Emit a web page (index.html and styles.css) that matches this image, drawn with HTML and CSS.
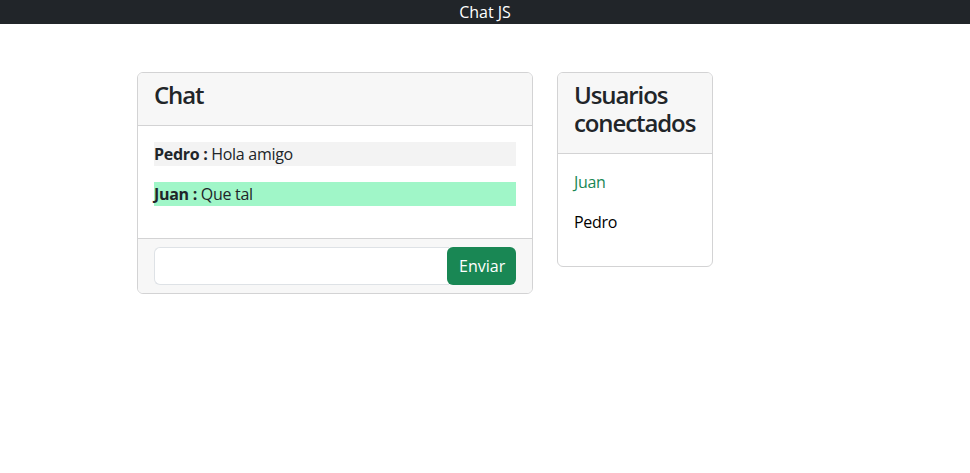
FILE: index.html
```html
<!DOCTYPE html>
<html lang="es">
<head>
<meta charset="utf-8">
<title>Chat JS</title>
<link rel="stylesheet" href="styles.css">
</head>
<body>
<nav class="navbar">Chat JS</nav>
<main class="container">
  <section class="card chat-card">
    <header class="card-header"><h3>Chat</h3></header>
    <div class="card-body">
      <p class="msg msg-other"><b>Pedro :</b> Hola amigo</p>
      <p class="msg msg-mine"><b>Juan :</b> Que tal</p>
    </div>
    <footer class="card-footer">
      <form class="input-group">
        <input type="text" class="form-control">
        <button type="button" class="btn-send">Enviar</button>
      </form>
    </footer>
  </section>
  <section class="card users-card">
    <header class="card-header"><h3>Usuarios conectados</h3></header>
    <div class="card-body">
      <p class="user user-me">Juan</p>
      <p class="user">Pedro</p>
    </div>
  </section>
</main>
</body>
</html>
```

FILE: styles.css
```css
* { box-sizing: border-box; }
body {
  margin: 0;
  font-family: "Open Sans", "Noto Sans", sans-serif;
  font-size: 16px;
  line-height: 1.5;
  color: #212529;
  background: #fff;
}
.navbar {
  height: 24px;
  background: #212529;
  color: #fff;
  text-align: center;
  font-size: 16px;
  line-height: 24px;
}
.container {
  width: 720px;
  margin: 48px auto 0;
  padding: 0 12px;
  display: flex;
  align-items: flex-start;
  gap: 24px;
  letter-spacing: -0.3px;
}
.card {
  border: 1px solid #d3d3d4;
  border-radius: 6px;
  background: #fff;
  overflow: hidden;
}
.chat-card { width: 396px; }
.users-card { width: 156px; }
.card-header {
  background: #f7f7f7;
  border-bottom: 1px solid #d3d3d4;
  padding: 8px 16px;
}
.card-header h3 {
  margin: 0 0 8px;
  font-size: 24px;
  font-weight: 600;
  line-height: 28px;
  letter-spacing: -1.1px;
}
.card-body { padding: 16px; }
.msg {
  margin: 0 0 16px;
  height: 24px;
  line-height: 24px;
}
.msg b { font-weight: 700; }
.msg-other { background: #f3f3f3; }
.msg-mine { background: #a0f6c8; }
.card-footer {
  background: #f7f7f7;
  border-top: 1px solid #d3d3d4;
  padding: 8px 16px;
}
.input-group { display: flex; margin: 0; }
.form-control {
  flex: 1;
  height: 38px;
  border: 1px solid #dee2e6;
  border-right: none;
  border-radius: 6px 0 0 6px;
  background: #fff;
  font: inherit;
  padding: 6px 12px;
}
.btn-send {
  height: 38px;
  width: 69px;
  border: none;
  border-radius: 6px;
  background: #198754;
  color: #fff;
  font: inherit;
  padding: 6px 12px;
  margin-left: -2px;
}
.user { margin: 0 0 16px; line-height: 24px; color: #000; }
.user-me { color: #198754; }
```
